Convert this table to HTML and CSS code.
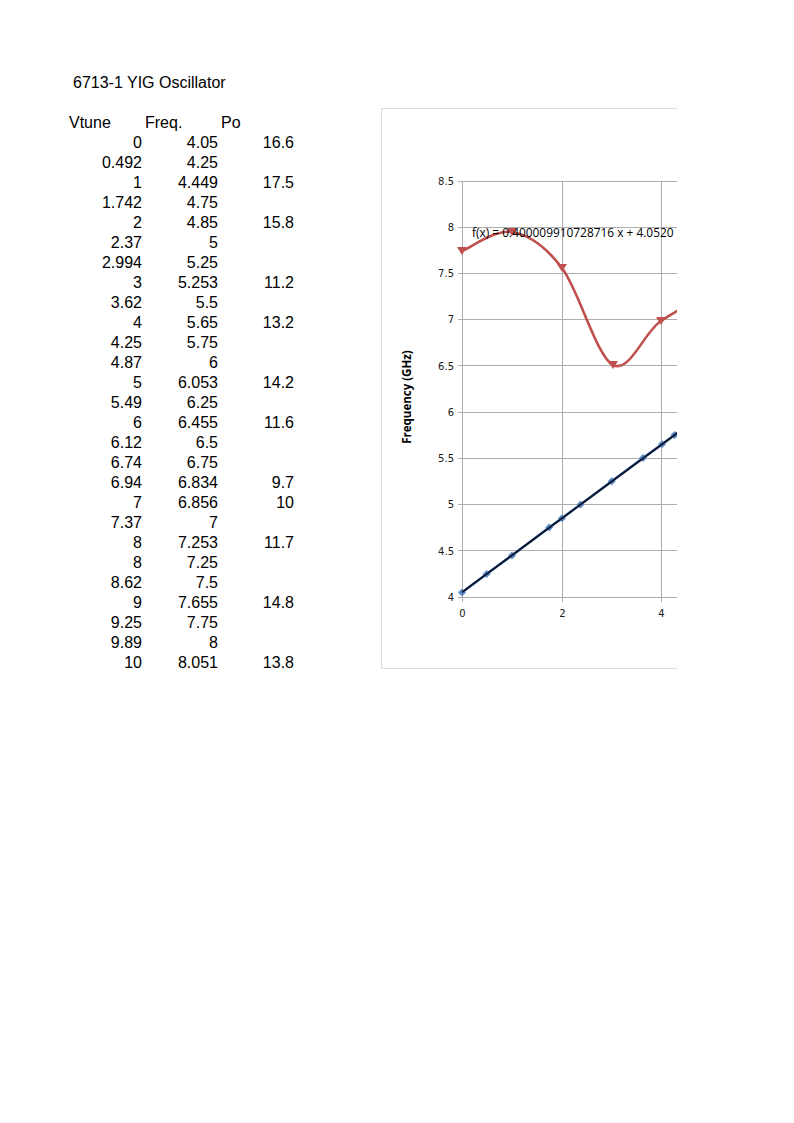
FILE: index.html
```html
<!DOCTYPE html>
<html>
<head>
<meta charset="utf-8">
<title>6713-1 YIG Oscillator</title>
<link rel="stylesheet" href="styles.css">
</head>
<body>
<div class="page">
  <div class="sheet">
    <div class="title">6713-1 YIG Oscillator</div>
    <div class="blank"></div>
    <div class="grid">
      <div class="hd">Vtune</div><div class="hd">Freq.</div><div class="hd">Po</div>
      <div>0</div><div>4.05</div><div>16.6</div>
      <div>0.492</div><div>4.25</div><div></div>
      <div>1</div><div>4.449</div><div>17.5</div>
      <div>1.742</div><div>4.75</div><div></div>
      <div>2</div><div>4.85</div><div>15.8</div>
      <div>2.37</div><div>5</div><div></div>
      <div>2.994</div><div>5.25</div><div></div>
      <div>3</div><div>5.253</div><div>11.2</div>
      <div>3.62</div><div>5.5</div><div></div>
      <div>4</div><div>5.65</div><div>13.2</div>
      <div>4.25</div><div>5.75</div><div></div>
      <div>4.87</div><div>6</div><div></div>
      <div>5</div><div>6.053</div><div>14.2</div>
      <div>5.49</div><div>6.25</div><div></div>
      <div>6</div><div>6.455</div><div>11.6</div>
      <div>6.12</div><div>6.5</div><div></div>
      <div>6.74</div><div>6.75</div><div></div>
      <div>6.94</div><div>6.834</div><div>9.7</div>
      <div>7</div><div>6.856</div><div>10</div>
      <div>7.37</div><div>7</div><div></div>
      <div>8</div><div>7.253</div><div>11.7</div>
      <div>8</div><div>7.25</div><div></div>
      <div>8.62</div><div>7.5</div><div></div>
      <div>9</div><div>7.655</div><div>14.8</div>
      <div>9.25</div><div>7.75</div><div></div>
      <div>9.89</div><div>8</div><div></div>
      <div>10</div><div>8.051</div><div>13.8</div>
    </div>
  </div>
  <div class="chart">
    <svg class="plot" width="295" height="559" viewBox="382 109 295 559" xmlns="http://www.w3.org/2000/svg">
      <g class="gridlines">
        <line x1="458" y1="597" x2="680" y2="597"/>
        <line x1="458" y1="550.78" x2="680" y2="550.78"/>
        <line x1="458" y1="504.56" x2="680" y2="504.56"/>
        <line x1="458" y1="458.34" x2="680" y2="458.34"/>
        <line x1="458" y1="412.12" x2="680" y2="412.12"/>
        <line x1="458" y1="365.9" x2="680" y2="365.9"/>
        <line x1="458" y1="319.68" x2="680" y2="319.68"/>
        <line x1="458" y1="273.46" x2="680" y2="273.46"/>
        <line x1="458" y1="227.24" x2="680" y2="227.24"/>
        <line x1="458" y1="181.02" x2="680" y2="181.02"/>
        <line x1="462.5" y1="181" x2="462.5" y2="602"/>
        <line x1="562.5" y1="181" x2="562.5" y2="602"/>
        <line x1="661.5" y1="181" x2="661.5" y2="602"/>
      </g>
      <g class="ylab">
        <text x="454" y="601">4</text>
        <text x="454" y="554.5">4.5</text>
        <text x="454" y="508.3">5</text>
        <text x="454" y="462">5.5</text>
        <text x="454" y="415.8">6</text>
        <text x="454" y="369.6">6.5</text>
        <text x="454" y="323.4">7</text>
        <text x="454" y="277.2">7.5</text>
        <text x="454" y="231">8</text>
        <text x="454" y="184.8">8.5</text>
      </g>
      <g class="xlab">
        <text x="462.5" y="617">0</text>
        <text x="562.5" y="617">2</text>
        <text x="661.5" y="617">4</text>
      </g>
      <text class="axtitle" transform="translate(411 397) rotate(-90)">Frequency (GHz)</text>

      <path class="red" d="M462 251 C470.3 247.8 495.3 229.2 512 232 C528.7 234.8 545.2 245.8 562 268 C578.8 290.2 596.5 356.2 613 365 C629.5 373.8 644.5 331.3 661 321 C677.5 310.7 695.2 296.5 712 303"/>
      <g class="redmk">
        <path d="M457 247 L467 247 L462 255 Z"/>
        <path d="M507 228 L517 228 L512 236 Z"/>
        <path d="M557 264 L567 264 L562 272 Z"/>
        <path d="M608 361 L618 361 L613 369 Z"/>
        <path d="M656 317 L666 317 L661 325 Z"/>
      </g>

      <polyline class="blue" points="462,592.4 486.6,573.9 512,555.4 549.1,527.6 562,518.3 580.5,504.4 611.7,481.3 612,481 643,458.1 662,444.2 674.5,435 705.5,412"/>
      <g class="bluemk">
        <path d="M462 588.4 L466 592.4 L462 596.4 L458 592.4 Z"/>
        <path d="M486.6 569.9 L490.6 573.9 L486.6 577.9 L482.6 573.9 Z"/>
        <path d="M512 551.4 L516 555.4 L512 559.4 L508 555.4 Z"/>
        <path d="M549.1 523.6 L553.1 527.6 L549.1 531.6 L545.1 527.6 Z"/>
        <path d="M562 514.3 L566 518.3 L562 522.3 L558 518.3 Z"/>
        <path d="M580.5 500.4 L584.5 504.4 L580.5 508.4 L576.5 504.4 Z"/>
        <path d="M611.7 477.3 L615.7 481.3 L611.7 485.3 L607.7 481.3 Z"/>
        <path d="M643 454.1 L647 458.1 L643 462.1 L639 458.1 Z"/>
        <path d="M662 440.2 L666 444.2 L662 448.2 L658 444.2 Z"/>
        <path d="M674.5 431 L678.5 435 L674.5 439 L670.5 435 Z"/>
      </g>
      <line class="trend" x1="462" y1="592.2" x2="690" y2="423.6"/>
      <text class="eq" x="472" y="237">f(x) = 0.400009910728716 x + 4.0520</text>
    </svg>
  </div>
</div>
</body>
</html>
```
FILE: styles.css
```css
html, body {
  margin: 0;
  padding: 0;
  background: #ffffff;
}
body {
  font-family: "Liberation Sans", Arial, sans-serif;
  font-size: 16px;
  color: #000000;
}
.page {
  display: flex;
  align-items: flex-start;
  padding: 73px 0 0 67px;
}
.sheet {
  width: 228px;
}
.title {
  height: 20px;
  line-height: 20px;
  padding-left: 6px;
  white-space: nowrap;
}
.blank {
  height: 20px;
}
.grid {
  display: grid;
  grid-template-columns: 76px 76px 76px;
  grid-auto-rows: 20px;
  line-height: 20px;
}
.grid > div {
  text-align: right;
  padding: 0 1px 0 2px;
  white-space: nowrap;
}
.grid > .hd {
  text-align: left;
}
.chart {
  margin-top: 35px;
  margin-left: 86px;
  width: 295px;
  height: 559px;
  border: 1px solid #dcdcdc;
  border-right: none;
  overflow: hidden;
}
.plot {
  display: block;
}
.gridlines line {
  stroke: #adadad;
  stroke-width: 1;
  shape-rendering: crispEdges;
}
.ylab text {
  font-family: "DejaVu Sans", sans-serif;
  font-size: 10px;
  fill: #1a1a1a;
  text-anchor: end;
}
.xlab text {
  font-family: "DejaVu Sans", sans-serif;
  font-size: 10px;
  fill: #1a1a1a;
  text-anchor: middle;
}
.axtitle {
  font-family: "Open Sans", sans-serif;
  font-weight: bold;
  font-size: 11.5px;
  fill: #000000;
  text-anchor: middle;
}
.red {
  fill: none;
  stroke: #c0504d;
  stroke-width: 2.6;
  stroke-linecap: round;
}
.redmk path {
  fill: #c0504d;
}
.blue {
  fill: none;
  stroke: #4f81bd;
  stroke-width: 2.5;
}
.bluemk path {
  fill: #5b8bc9;
}
.trend {
  stroke: #0d1830;
  stroke-width: 2;
}
.eq {
  font-family: "Open Sans", sans-serif;
  font-size: 11.9px;
  fill: #000000;
}
```
